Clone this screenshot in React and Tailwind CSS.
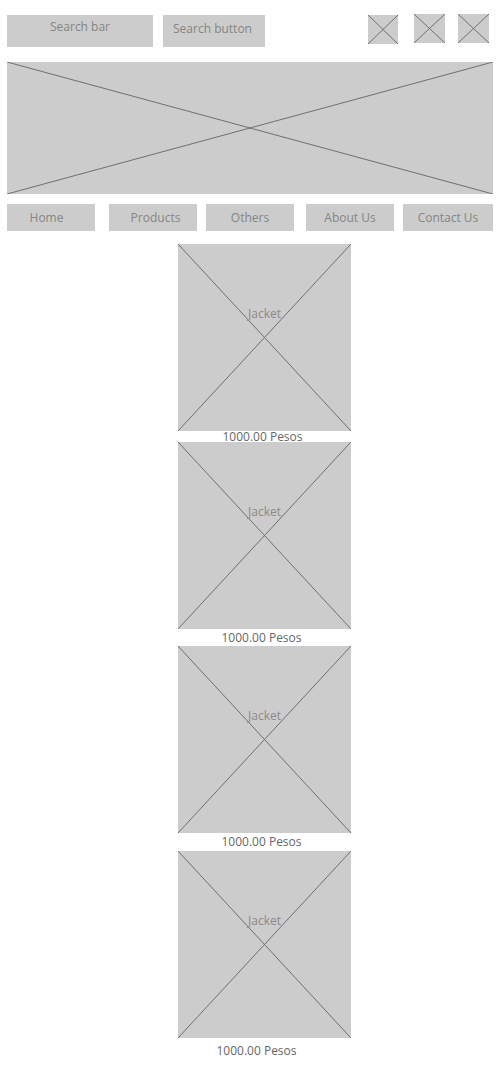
import React from "react";

function XBox({ className = "", children }) {
  return (
    <div className={`relative bg-[#cccccc] ${className}`}>
      <svg
        className="absolute inset-0 w-full h-full"
        viewBox="0 0 100 100"
        preserveAspectRatio="none"
      >
        <line x1="0" y1="0" x2="100" y2="100" stroke="#6f6f6f" strokeWidth="1" vectorEffect="non-scaling-stroke" />
        <line x1="100" y1="0" x2="0" y2="100" stroke="#6f6f6f" strokeWidth="1" vectorEffect="non-scaling-stroke" />
      </svg>
      {children}
    </div>
  );
}

// price line height/offset differs a bit per card in the mockup
const products = [
  { price: "h-[11px] leading-[11px] pr-[4px]" },
  { price: "h-[17px] leading-[17px] pr-[6px]" },
  { price: "h-[18px] leading-[18px] pr-[6px]" },
  { price: "h-[26px] leading-[26px] pr-[16px]" },
];

const nav = [
  { label: "Home", w: "w-[88px]", ml: "ml-[7px]", pad: "pr-[9px]" },
  { label: "Products", w: "w-[88px]", ml: "ml-[14px]", pad: "pl-[5px]" },
  { label: "Others", w: "w-[88px]", ml: "ml-[9px]", pad: "" },
  { label: "About Us", w: "w-[88px]", ml: "ml-[12px]", pad: "" },
  { label: "Contact Us", w: "w-[90px]", ml: "ml-[9px]", pad: "" },
];

export default function App() {
  return (
    <div className="w-[500px] min-h-[1080px] bg-white font-['Open_Sans','Noto_Sans',sans-serif] text-[12px] text-[#858585]">
      <div className="flex items-start pt-[15px]">
        <div className="ml-[7px] w-[146px] h-8 bg-[#cccccc] text-center leading-[24px]">
          Search bar
        </div>
        <div className="ml-[10px] w-[102px] h-8 bg-[#cccccc] text-center leading-[28px] pr-[3px]">
          Search button
        </div>
        <XBox className="ml-[103px] w-[30px] h-[29px]" />
        <XBox className="ml-[16px] -mt-px w-[31px] h-[29px]" />
        <XBox className="ml-[13px] -mt-px w-[31px] h-[29px]" />
      </div>

      <XBox className="mt-[15px] mx-[7px] h-[132px]" />

      <div className="flex mt-[10px]">
        {nav.map((n) => (
          <div
            key={n.label}
            className={`${n.ml} ${n.w} ${n.pad} h-[27px] bg-[#cccccc] text-center leading-[27px]`}
          >
            {n.label}
          </div>
        ))}
      </div>

      <div className="flex flex-col items-center mt-[13px] pl-[29px]">
        {products.map((p, i) => (
          <div key={i} className="flex flex-col items-center">
            <XBox className="w-[173px] h-[187px]">
              <div className="absolute left-0 right-0 top-[62px] text-center leading-[16px] text-[#8a8a8a]">
                Jacket
              </div>
            </XBox>
            <div className={`${p.price} w-[173px] text-center text-[#666666] whitespace-nowrap`}>
              1000.00 Pesos
            </div>
          </div>
        ))}
      </div>
    </div>
  );
}
